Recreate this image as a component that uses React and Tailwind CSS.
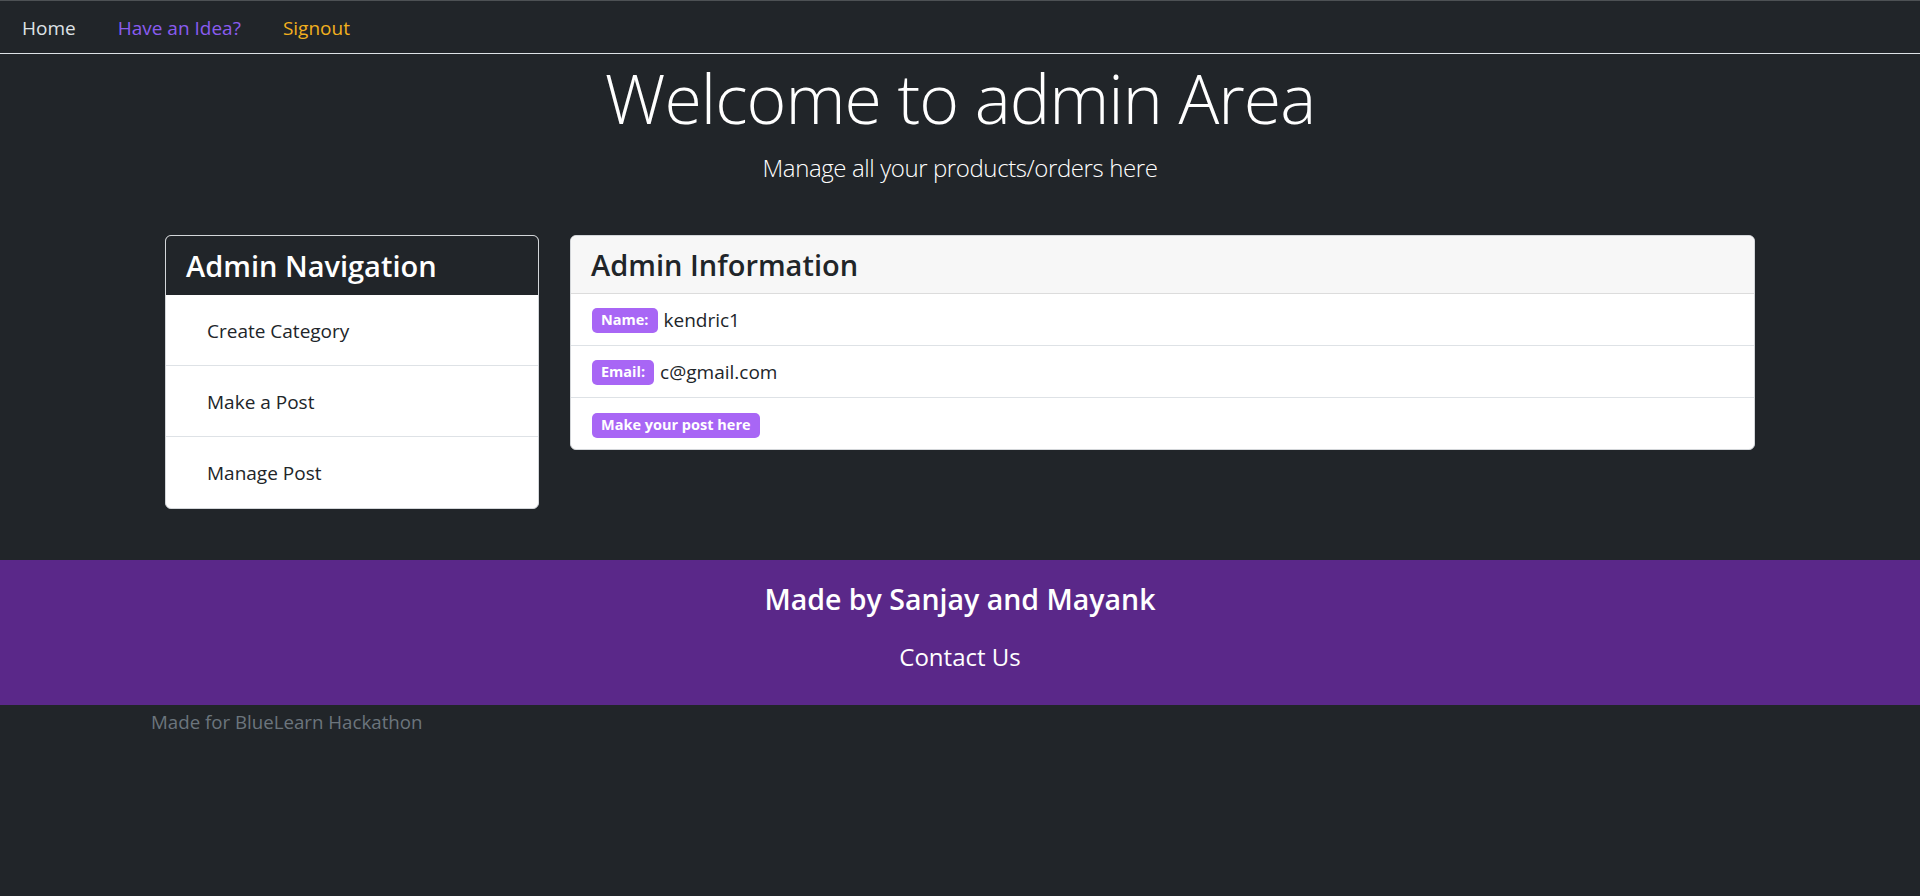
import React from "react";

const font = { fontFamily: '"Open Sans", "Noto Sans", sans-serif' };

function Badge({ children }) {
  return (
    <span className="inline-flex h-[25px] items-center rounded-[5px] bg-[#a866f5] px-[9px] text-[14.5px] font-bold leading-none text-white">
      {children}
    </span>
  );
}

export default function App() {
  return (
    <div className="min-h-[896px] bg-[#212529] text-[19px]" style={font}>
      <nav className="flex h-[54px] items-center border-t border-b border-t-[#4d5154] border-b-[#dee2e6] pt-[2px]">
        <a className="pl-[22px] pr-[21px] text-[19px] leading-[30px] text-[#dee2e6]">Home</a>
        <a className="px-[21px] text-[19px] leading-[30px] text-[#8a5cf0]">Have an Idea?</a>
        <a className="px-[21px] text-[19px] leading-[30px] text-[#f2b01e]">Signout</a>
      </nav>

      <div className="text-center text-white">
        <h1 className="mt-[2px] text-[68px] font-light leading-[84px] tracking-[-1px]">Welcome to admin Area</h1>
        <p className="mt-[9px] text-[24px] font-light leading-[37px] tracking-[-0.4px]">Manage all your products/orders here</p>
      </div>

      <div className="mx-auto mt-[49px] flex w-[1590px] items-start gap-[31px]">
        <div className="w-[374px] overflow-hidden rounded-[6px] border border-[#d3d6d9] bg-white">
          <div className="flex h-[59px] items-center bg-[#212529] px-[20px]">
            <h4 className="text-[29px] font-semibold leading-[36px] text-white">Admin Navigation</h4>
          </div>
          <ul>
            <li className="flex h-[71px] items-center border-b border-[#dee2e6] pl-[41px] pt-[2px] text-[#212529]">Create Category</li>
            <li className="flex h-[71px] items-center border-b border-[#dee2e6] pl-[41px] pt-[2px] text-[#212529]">Make a Post</li>
            <li className="flex h-[71px] items-center pl-[41px] pt-[2px] text-[#212529]">Manage Post</li>
          </ul>
        </div>

        <div className="flex-1 overflow-hidden rounded-[6px] border border-[#d3d6d9] bg-white">
          <div className="flex h-[58px] items-center border-b border-[#dcdcdc] bg-[#f7f7f7] px-[20px]">
            <h4 className="text-[29px] font-semibold leading-[36px] text-[#212529]">Admin Information</h4>
          </div>
          <ul>
            <li className="flex h-[52px] items-center gap-[6px] border-b border-[#dee2e6] px-[21px] pt-[2px] text-[#212529]">
              <Badge>Name:</Badge>
              <span>kendric1</span>
            </li>
            <li className="flex h-[52px] items-center gap-[6px] border-b border-[#dee2e6] px-[21px] pt-[2px] text-[#212529]">
              <Badge>Email:</Badge>
              <span>c@gmail.com</span>
            </li>
            <li className="flex h-[51px] items-center px-[21px] pt-[3px] text-[#212529]">
              <Badge>Make your post here</Badge>
            </li>
          </ul>
        </div>
      </div>

      <footer className="mt-[51px] flex h-[145px] flex-col items-center bg-[#5a2889] text-white">
        <h4 className="mt-[21px] text-[28.5px] font-semibold leading-[36px]">Made by Sanjay and Mayank</h4>
        <p className="mt-[21px] text-[24px] leading-[37px]">Contact Us</p>
      </footer>

      <p className="px-[151px] pt-[2px] text-[18.7px] leading-[30px] text-[#6c757d]">Made for BlueLearn Hackathon</p>
    </div>
  );
}
